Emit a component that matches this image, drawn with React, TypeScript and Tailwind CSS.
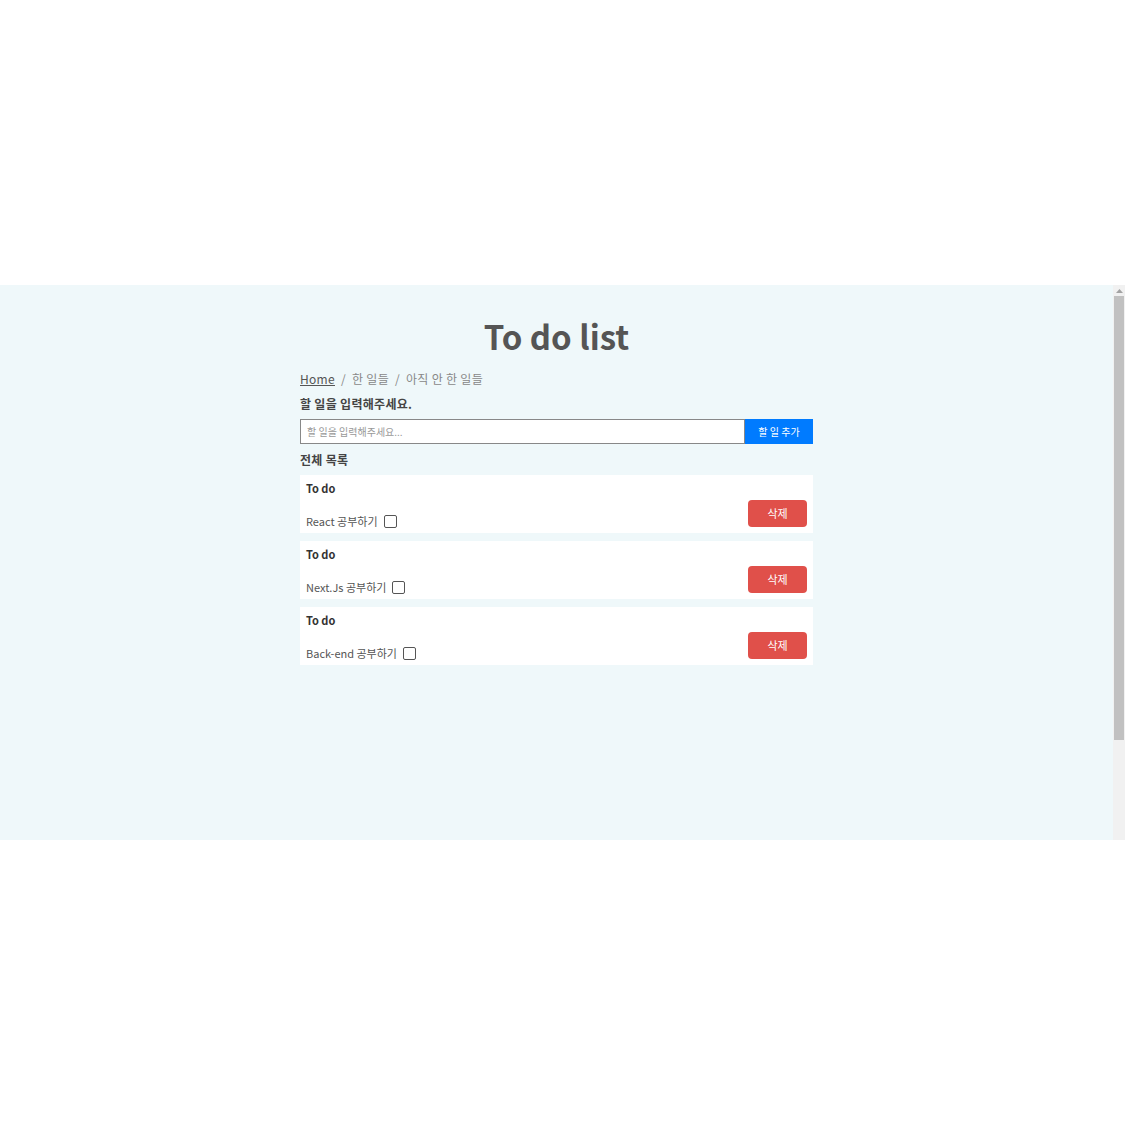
import React from 'react';

const todos = [
  { id: 't1', text: 'React 공부하기' },
  { id: 't2', text: 'Next.Js 공부하기' },
  { id: 't3', text: 'Back-end 공부하기' },
];

const font = { fontFamily: '"Noto Sans CJK KR", "Noto Sans", sans-serif' };

const TodoCard: React.FC<{ text: string }> = ({ text }) => (
  <div className="bg-white h-[58px] px-[6px] flex justify-between">
    <div className="flex flex-col">
      <p className="text-[11px] font-bold text-[#333] leading-[14px] mt-[6px]">To do</p>
      <div className="flex items-center mt-[19px] gap-[6px]">
        <span className="text-[11px] text-[#555] leading-[14px]">{text}</span>
        <span className="w-[13px] h-[13px] border-[1.5px] border-[#555] rounded-[2px] bg-white" />
      </div>
    </div>
    <button className="self-start mt-[25px] w-[59px] h-[27px] rounded-[4px] bg-[#e0504a] text-white text-[11px]">
      삭제
    </button>
  </div>
);

export default function App() {
  return (
    <div className="w-[1125px] h-[1125px] bg-white flex flex-col" style={font}>
      <div className="h-[285px]" />
      <div className="h-[555px] bg-[#eff8fa] flex">
        <div className="flex-1">
          <div className="w-[513px] mx-auto">
            <h1 className="text-center text-[33px] font-bold text-[#555] leading-[40px] mt-[31px]">To do list</h1>
            <nav className="mt-[15px] flex items-center gap-[6px] text-[12px] text-[#888] leading-[16px] tracking-[0.3px]">
              <span className="underline text-[#555]">Home</span>
              <span>/</span>
              <span>한 일들</span>
              <span>/</span>
              <span>아직 안 한 일들</span>
            </nav>
            <p className="mt-[9px] text-[12px] font-bold text-[#444] leading-[16px] tracking-[0.3px]">할 일을 입력해주세요.</p>
            <div className="mt-[7px] flex h-[25px]">
              <input
                className="flex-1 border border-[#888] bg-white px-[6px] text-[10px] outline-none placeholder:text-[#999]"
                placeholder="할 일을 입력해주세요..."
                readOnly
              />
              <button className="w-[68px] bg-[#007bff] text-white text-[10px]">할 일 추가</button>
            </div>
            <p className="mt-[8px] text-[12px] font-bold text-[#444] leading-[16px] tracking-[0.3px]">전체 목록</p>
            <div className="mt-[7px] flex flex-col gap-[8px]">
              {todos.map((t) => (
                <TodoCard key={t.id} text={t.text} />
              ))}
            </div>
          </div>
        </div>
        <div className="w-[12px] bg-[#f1f1f1] flex flex-col items-center">
          <div className="h-[11px] flex items-center justify-center">
            <svg width="7" height="4" viewBox="0 0 7 4">
              <path d="M0 4 L3.5 0 L7 4 Z" fill="#a3a3a3" />
            </svg>
          </div>
          <div className="w-[10px] h-[444px] bg-[#c1c1c1]" />
        </div>
      </div>
    </div>
  );
}
